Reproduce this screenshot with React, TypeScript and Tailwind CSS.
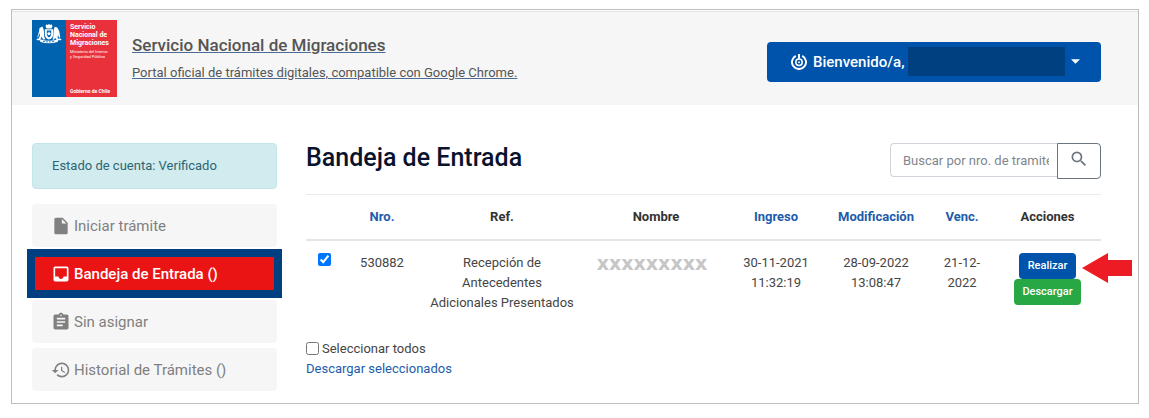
import type { ReactNode } from "react";
import { MdAssignment, MdHistory, MdInbox, MdInsertDriveFile, MdSearch } from "react-icons/md";

function Logo() {
  return (
    <div className="flex h-[77px] w-[85px] shrink-0 text-white">
      <div className="w-[34px] bg-[#0063b0] pt-1">
        <svg viewBox="0 0 26 20" className="mx-auto h-5 w-[26px]" fill="#fff" aria-label="Escudo de Chile">
          <path d="M9.500 2 10.500.3l1.200.8L13 0l1.300 1.100 1.200-.8 1 1.700-1 2.600h-5z" />
          <path fillRule="evenodd" d="M8.800 5.200h8.400v5q0 4-4.200 5.300-4.200-1.300-4.200-5.300zm2 1.300v3.700q0 2.200 2.200 3.300 2.200-1.100 2.200-3.300V6.500z" />
          <path d="M13 7.200l.7 1.500 1.500.2-1.100 1.100.3 1.600-1.400-.8-1.400.8.300-1.600-1.100-1.100 1.500-.2z" />
          <path d="M3.500 4 6.500 2.600l1.300 3.600.4 6.600 1.300 2.500-2.700.2-1-3-1.500 3H2.300L4 11.500 3.300 9 2.300 13l-1 .3L3 7.500z" />
          <path d="M18.600 2.800 21.300 3.600l2 3.700.9 5.700-1.200 1-.9-3-.6 2.500 1.400 2.200h-2.600l-1.200-2-1 2-1.600-.2.800-3 .4-6z" />
          <path d="M.3 15q2.500-1 4.500.6Q13 18 21.200 15.600q2-1.600 4.500-.6l-1 1.200h-2.500l-.7 1.800Q13 20.500 4.500 18l-.7-1.800H1.300z" />
          <path d="M7 17.300q6 1.200 12 0" stroke="#0063b0" strokeWidth=".8" fill="none" strokeDasharray="2 1" />
        </svg>
      </div>
      <div className="flex flex-1 flex-col bg-[#e8313b] pt-[3px] pb-[2px] pl-1 whitespace-nowrap">
        <div className="text-[7px] leading-[8px] font-bold">
          Servicio
          <br />
          Nacional de
          <br />
          Migraciones
        </div>
        <div className="mt-[2px] text-[4px] leading-[5px]">
          Ministerio del Interior
          <br />y Seguridad Pública
        </div>
        <div className="mt-auto text-[5px] leading-[7px] font-bold">Gobierno de Chile</div>
      </div>
    </div>
  );
}

function ClaveIcon() {
  return (
    <svg viewBox="0 0 16 16" className="size-4" fill="none" stroke="#fff" strokeWidth="2" aria-hidden="true">
      <path d="M4.800 1.800a7 7 0 1 0 6.400 0" />
      <circle cx="8" cy="8.200" r="3.200" strokeWidth="1.500" />
      <path d="M8 0v4.800" />
      <circle cx="8" cy="8.200" r="1" fill="#fff" stroke="none" />
    </svg>
  );
}

function MenuItem({ icon, label, active = false }: { icon: ReactNode; label: string; active?: boolean }) {
  return (
    <li>
      <a
        href="#"
        aria-current={active ? "page" : undefined}
        className={
          active
            ? "relative flex h-[43px] items-center gap-[3px] bg-[#ea1414] px-[19px] text-[15px] font-medium text-white"
            : "flex h-[43px] items-center gap-[3px] rounded-sm bg-[#f6f6f6] px-[19px] text-[15px] text-[#808080]"
        }
      >
        {icon}
        {label}
        {active && <span className="absolute -inset-x-[5px] -inset-y-[3px] border-8 border-[#003f80]" />}
      </a>
    </li>
  );
}

const link = "text-[#1d5cab]";

export default function App() {
  return (
    <div className="pt-[9px] pr-[10px] pb-[14px] pl-[11px] font-['Roboto',sans-serif] text-[13px] leading-5 text-[#454545]">
      <div className="border border-[#bdbdbd] bg-white pt-px pb-3">
        <header className="flex h-[94px] items-center justify-between border-t border-[#e2e2e2] bg-[#f6f6f6] pr-[37px] pl-5">
          <a href="#" className="flex items-center gap-[15px] text-[#555]">
            <Logo />
            <span className="flex flex-col gap-2 underline decoration-[#4b6a94]">
              <span className="text-[17px] leading-5 font-medium">Servicio Nacional de Migraciones</span>
              <span className="text-[13px] leading-5">Portal oficial de trámites digitales, compatible con Google Chrome.</span>
            </span>
          </a>
          <button type="button" className="mt-1.5 flex h-10 w-[334px] items-center rounded bg-[#0053ab] pl-6 text-[15px] font-medium text-white" aria-label="Bienvenido/a">
            <ClaveIcon />
            <span className="ml-1.5">Bienvenido/a,</span>
            <span className="ml-[3px] h-[29px] w-[157px] bg-[#003f80]" />
            <svg viewBox="0 0 10 5" className="ml-1.5 h-[5px] w-[9px]" fill="#fff" aria-hidden="true">
              <path d="M0 0h10L5 5z" />
            </svg>
          </button>
        </header>

        <div className="flex gap-[29px] pt-[38px] pr-[37px] pl-5">
          <nav className="w-[245px] shrink-0">
            <p className="rounded border border-[#c3e6eb] bg-[#d1ebef] px-[19px] py-3 text-[#2d6672]">Estado de cuenta: Verificado</p>
            <ul className="mt-[15px] flex flex-col gap-[5px]">
              <MenuItem icon={<MdInsertDriveFile className="size-5" />} label="Iniciar trámite" />
              <MenuItem icon={<MdInbox className="size-5" />} label="Bandeja de Entrada ()" active />
              <MenuItem icon={<MdAssignment className="size-5" />} label="Sin asignar" />
              <MenuItem icon={<MdHistory className="size-5" />} label="Historial de Trámites ()" />
            </ul>
          </nav>

          <main className="min-w-0 flex-1">
            <div className="flex items-start justify-between">
              <h1 className="text-[25px] leading-[30px] font-medium text-[#0a132d]">Bandeja de Entrada</h1>
              <form className="flex items-start">
                <input
                  type="text"
                  aria-label="Buscar por nro. de tramite"
                  placeholder="Buscar por nro. de tramite"
                  className="h-[34px] w-[167px] rounded-l border border-r-0 border-[#ced4da] pr-2 pl-3 placeholder:text-[#7f868c]"
                />
                <button type="button" aria-label="Buscar" className="flex h-9 w-11 items-center justify-center rounded-r border border-[#6c757d] pb-1 text-[#6c757d]">
                  <MdSearch className="size-5" />
                </button>
              </form>
            </div>

            <table className="mt-[15px] w-full table-fixed border-t border-[#e9ebed] text-center">
              <colgroup>
                <col className="w-[36px]" />
                <col className="w-[80px]" />
                <col className="w-[160px]" />
                <col className="w-[148px]" />
                <col className="w-[92px]" />
                <col className="w-[108px]" />
                <col className="w-[64px]" />
                <col className="w-[107px]" />
              </colgroup>
              <thead>
                <tr className="h-[45px] border-b-2 border-[#e2e6ea] text-[#333]">
                  <th aria-label="Selección" />
                  <th className="font-bold"><a href="#" className={link}>Nro.</a></th>
                  <th className="font-bold">Ref.</th>
                  <th className="font-bold">Nombre</th>
                  <th className="font-bold"><a href="#" className={link}>Ingreso</a></th>
                  <th className="font-bold"><a href="#" className={link}>Modificación</a></th>
                  <th className="font-bold"><a href="#" className={link}>Venc.</a></th>
                  <th className="font-bold">Acciones</th>
                </tr>
              </thead>
              <tbody>
                <tr className="align-top">
                  <td className="pt-3">
                    <input type="checkbox" defaultChecked aria-label="Seleccionar 530882" className="mx-auto block size-[13px] accent-[#0075ff]" />
                  </td>
                  <td className="pt-3">530882</td>
                  <td className="px-2 pt-3">Recepción de Antecedentes Adicionales Presentados</td>
                  <td className="pt-3 pr-2 font-['DejaVu_Sans',sans-serif] text-[19px] font-bold text-[#c6c6c6]">xxxxxxxxx</td>
                  <td className="px-2 pt-3">30-11-2021 11:32:19</td>
                  <td className="px-4 pt-3">28-09-2022 13:08:47</td>
                  <td className="px-2 pt-3">21-12-2022</td>
                  <td className="relative pt-3 text-[11px] font-medium text-white">
                    <button type="button" className="mx-auto block h-[26px] rounded bg-[#0053ab] px-[9px]">Realizar</button>
                    <button type="button" className="mx-auto block h-[26px] rounded bg-[#28a745] px-2">Descargar</button>
                    <svg viewBox="0 0 50 30" className="absolute top-3 -right-[31px] h-[30px] w-[50px]" fill="#ed1c24" aria-hidden="true">
                      <path d="M0 15 26 0v7h24v16H26v7z" />
                    </svg>
                  </td>
                </tr>
              </tbody>
            </table>

            <div className="mt-[26px]">
              <label className="flex items-center gap-[3px]">
                <input type="checkbox" className="size-[13px]" />
                Seleccionar todos
              </label>
              <a href="#" className={link}>Descargar seleccionados</a>
            </div>
          </main>
        </div>
      </div>
    </div>
  );
}
